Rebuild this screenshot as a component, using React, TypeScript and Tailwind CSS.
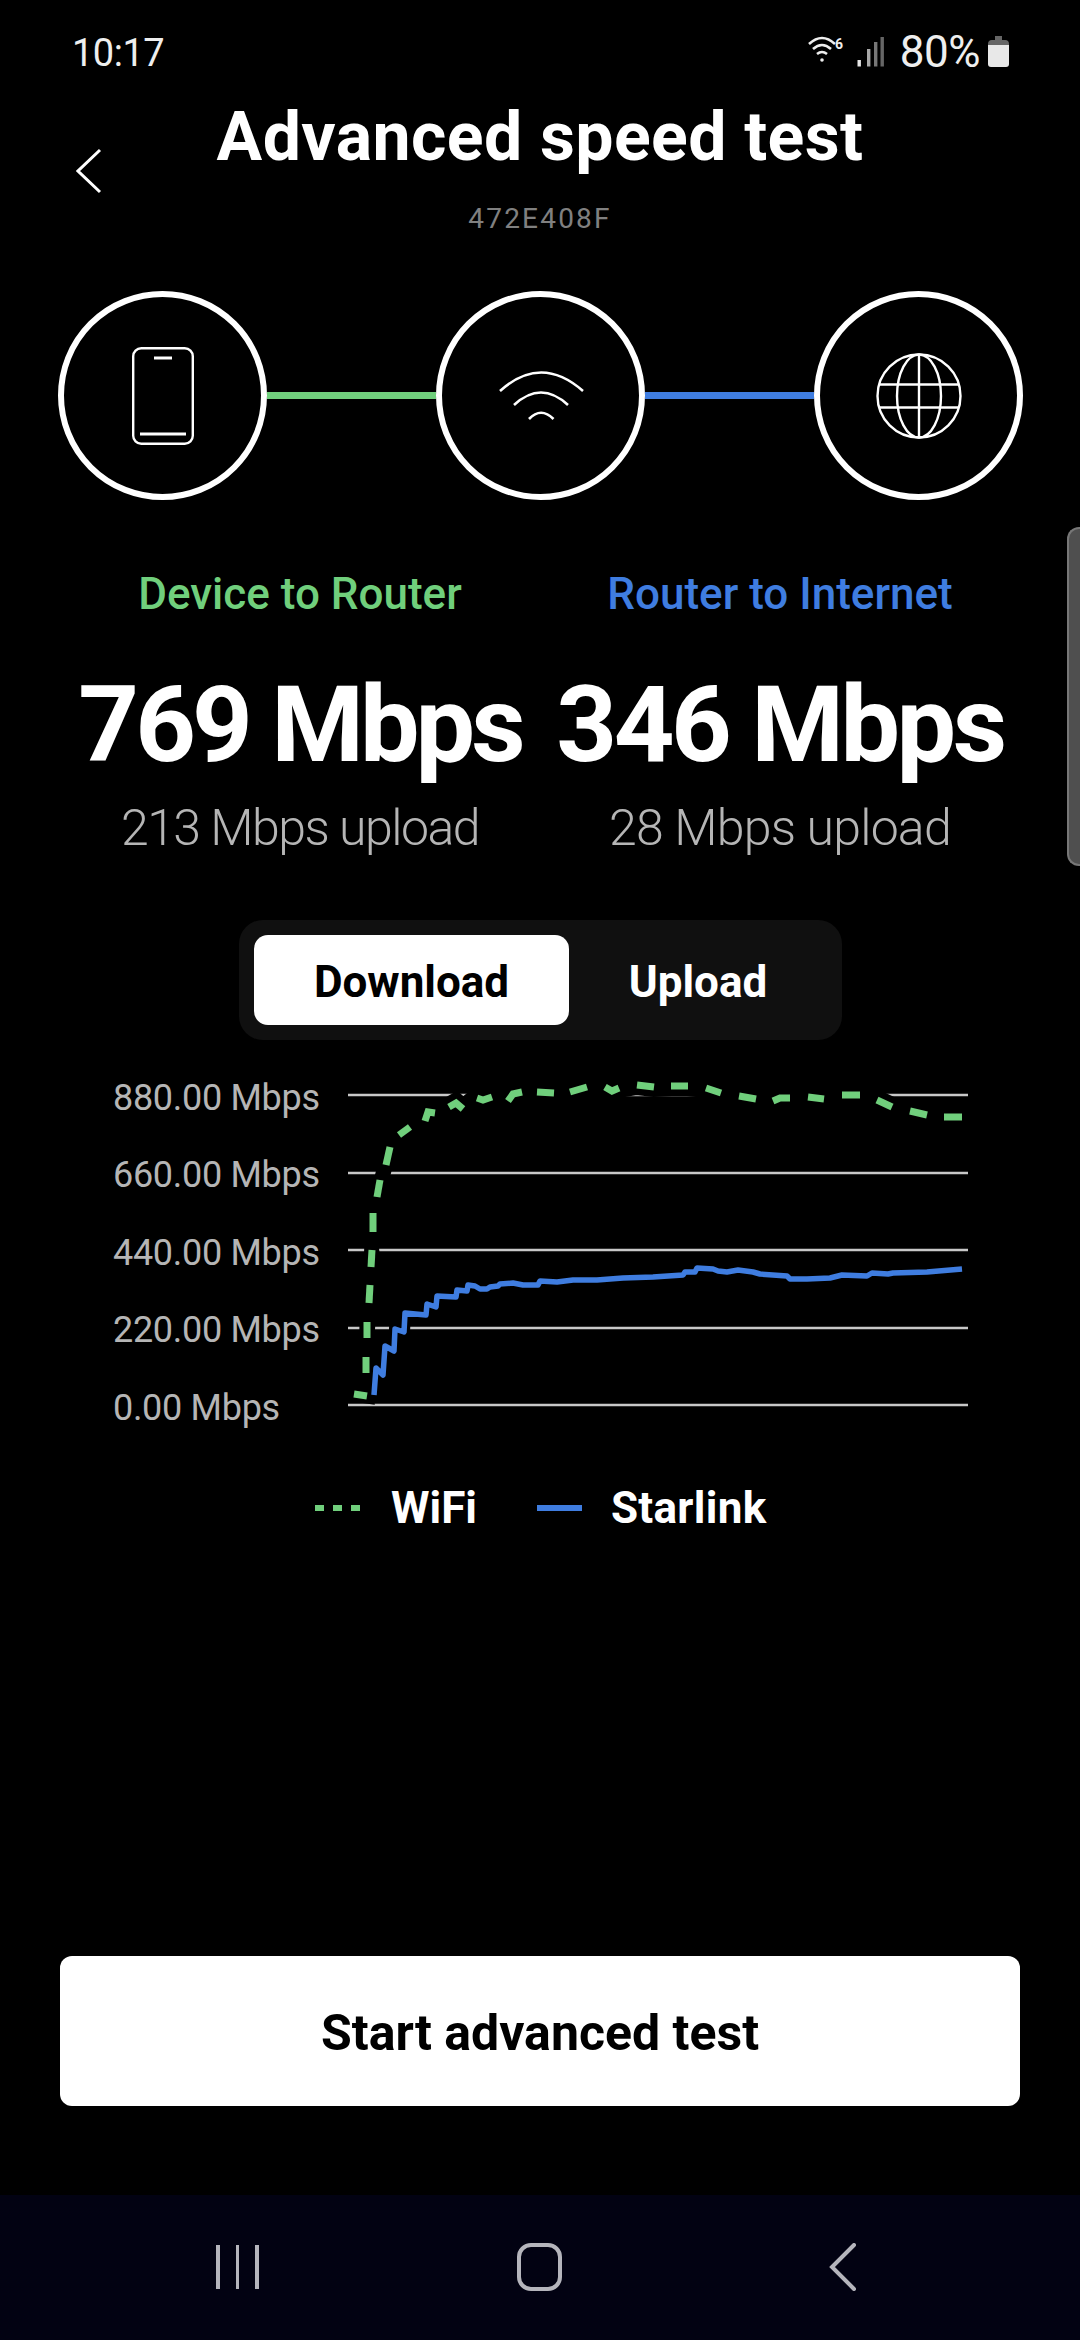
import React from "react";

const gridY = [1095, 1173, 1250, 1328, 1405];
const axisLabels = ["880.00 Mbps", "660.00 Mbps", "440.00 Mbps", "220.00 Mbps", "0.00 Mbps"];

// each entry is one dash of the wifi series
const wifiDashes = [
  "354,1394 367,1396",
  "366,1357 366,1373",
  "367,1322 367,1338",
  "370,1285 369,1303",
  "372,1250 371,1267",
  "373,1213 373,1232",
  "380,1180 377,1197",
  "390,1147 386,1165",
  "410,1127 399,1135",
  "425,1121 428,1112 435,1113",
  "449,1107 456,1103 463,1109",
  "477,1098 483,1100 492,1097",
  "508,1101 513,1094 522,1092",
  "537,1092 554,1093",
  "570,1092 587,1087",
  "605,1087 612,1091 619,1088",
  "637,1085 654,1087",
  "671,1086 688,1086",
  "706,1088 721,1093",
  "739,1096 756,1099",
  "773,1101 780,1098 790,1098",
  "808,1097 824,1099",
  "842,1095 860,1095",
  "877,1100 892,1107",
  "910,1111 927,1115",
  "944,1117 962,1117",
];

const starlinkLine =
  "374,1395 376,1368 383,1375 385,1346 394,1351 395,1329 404,1332 405,1313 426,1315 427,1304 436,1307 437,1296 456,1297 457,1290 467,1291 468,1285 475,1286 480,1289 487,1289 490,1287 498,1286 500,1284 513,1283 523,1285 538,1285 540,1281 557,1282 573,1280 597,1280 623,1278 653,1277 683,1275 685,1272 695,1272 697,1268 713,1269 718,1271 727,1272 738,1270 753,1272 760,1274 787,1276 790,1279 807,1279 830,1278 842,1275 867,1276 872,1273 888,1274 893,1273 927,1272 962,1269";

const StatusIcons = () => (
  <svg width="76" height="32" viewBox="806 37 76 32" fill="none">
    <path d="M807 45 Q820 33 833 45" stroke="#eee" strokeWidth="2.6" />
    <path d="M811 50 Q820 42 829 50" stroke="#eee" strokeWidth="2.6" />
    <path d="M815 55 Q820 51 825 55" stroke="#eee" strokeWidth="2.6" />
    <circle cx="820" cy="61" r="1.8" fill="#eee" />
    <text x="833" y="50" fontSize="14" fontWeight="700" fill="#eee" fontFamily="Roboto, sans-serif">
      6
    </text>
    <rect x="855.5" y="61" width="3.4" height="6.5" fill="#e6e6e6" />
    <rect x="865" y="50" width="3.4" height="17.5" fill="#a8a8a8" />
    <rect x="872" y="43" width="3.4" height="24.5" fill="#777" />
    <rect x="878.5" y="38" width="3.4" height="29.5" fill="#666" />
  </svg>
);

const Battery = () => (
  <svg width="21" height="32" viewBox="0 0 21 32">
    <path d="M7 0h7v4h3a4 4 0 0 1 4 4v1H0V8a4 4 0 0 1 4-4h3z" fill="#666" />
    <path d="M0 9h21v19a3 3 0 0 1-3 3H3a3 3 0 0 1-3-3z" fill="#e8e8e8" />
  </svg>
);

const PhoneIcon = () => (
  <svg width="62" height="98" viewBox="0 0 62 98" fill="none" stroke="#fff">
    <rect x="1.2" y="1.2" width="59.6" height="95.6" rx="8" strokeWidth="2.4" />
    <path d="M22 11h18" strokeWidth="3" />
    <path d="M8 87h46" strokeWidth="3" />
  </svg>
);

const WifiIcon = () => (
  <svg width="86" height="50" viewBox="497 371 86 50" fill="none" stroke="#fff" strokeWidth="2.6">
    <path d="M499 391 Q540 354 582 391" />
    <path d="M513 405 Q540 380 567 405" />
    <path d="M528 419 Q540 406.5 552.5 419" />
  </svg>
);

const GlobeIcon = () => (
  <svg width="86" height="86" viewBox="0 0 86 86" fill="none" stroke="#fff" strokeWidth="2.4">
    <circle cx="43" cy="43" r="41.5" />
    <ellipse cx="43" cy="43" rx="22" ry="41.5" />
    <path d="M43 1.5v83" />
    <path d="M3 31.5h80" />
    <path d="M3 54.5h80" />
  </svg>
);

const Node = ({ children }: { children: React.ReactNode }) => (
  <div className="w-[209px] h-[209px] shrink-0 rounded-full border-[6px] border-white flex items-center justify-center">
    {children}
  </div>
);

const Chart = () => (
  <div className="flex mt-[16px] pl-[113px]">
    <div className="w-[227px] pt-[3px] flex flex-col text-[36px] text-[#b5b5b5] tracking-[-0.3px]">
      {axisLabels.map((label) => (
        <div key={label} className="h-[77.5px] flex items-center">
          {label}
        </div>
      ))}
    </div>
    <svg className="self-start" width="640" height="388" viewBox="340 1056 640 388" fill="none">
      {gridY.map((y) => (
        <line key={y} x1="348" x2="968" y1={y} y2={y} stroke="#c8c8c8" strokeWidth="2.6" />
      ))}
      <polyline points={wifiDashes.slice(0, 10).join(" ")} stroke="#000" strokeWidth="15" />
      <polyline points={wifiDashes.slice(9).join(" ")} stroke="#000" strokeWidth="20" />
      <polyline points={starlinkLine} stroke="#000" strokeWidth="12" />
      {wifiDashes.map((points) => (
        <polyline key={points} points={points} stroke="#70cf7c" strokeWidth="7" />
      ))}
      <polyline points={starlinkLine} stroke="#3f7de0" strokeWidth="5.5" strokeLinejoin="round" />
    </svg>
  </div>
);

export default function App() {
  return (
    <div className="relative w-[1080px] h-[2340px] overflow-hidden bg-black text-white flex flex-col font-['Roboto',sans-serif]">
      {/* status bar */}
      <div className="h-[104px] shrink-0 flex items-center justify-between pl-[72px] pr-[71px]">
        <span className="text-[38px] text-[#eee] tracking-[-0.5px] pt-[2px]">10:17</span>
        <div className="flex items-center">
          <StatusIcons />
          <span className="ml-[16px] mr-[8px] text-[44px] text-[#eee] tracking-[-0.5px]">80%</span>
          <Battery />
        </div>
      </div>

      {/* header */}
      <div className="h-[134px] shrink-0 grid grid-cols-[1fr_auto_1fr]">
        <div className="pl-[76px] self-center">
          <svg width="26" height="46" viewBox="0 0 26 46" fill="none" stroke="#fff" strokeWidth="3">
            <path d="M24 2 L2 23 L24 44" />
          </svg>
        </div>
        <div className="flex flex-col items-center pt-[2px]">
          <h1 className="text-[68px] leading-[62px] font-bold tracking-[0.4px]">Advanced speed test</h1>
          <div className="mt-[36px] text-[28px] leading-[30px] text-[#808080] tracking-[2.2px]">472E408F</div>
        </div>
        <div />
      </div>

      {/* device to router to internet */}
      <div className="mt-[53px] flex items-center pl-[58px]">
        <Node>
          <PhoneIcon />
        </Node>
        <div className="w-[169px] h-[7px] bg-[#70cf7c]" />
        <Node>
          <WifiIcon />
        </Node>
        <div className="w-[169px] h-[7px] bg-[#3f7de0]" />
        <Node>
          <GlobeIcon />
        </Node>
      </div>

      {/* results */}
      <div className="grid grid-cols-2 px-[60px] text-center">
        <div className="mt-[72px] text-[44px] leading-[44px] font-medium text-[#70cf7c]">Device to Router</div>
        <div className="mt-[72px] text-[44px] leading-[44px] font-medium text-[#3f7de0]">Router to Internet</div>
        <div className="mt-[54px] text-[106px] leading-[110px] font-bold tracking-[-4px] whitespace-nowrap">769 Mbps</div>
        <div className="mt-[54px] text-[106px] leading-[110px] font-bold tracking-[-3.5px] whitespace-nowrap">346 Mbps</div>
        <div className="mt-[20px] text-[50px] leading-[56px] font-light text-[#b5b5b5] tracking-[-1.5px]">213 Mbps upload</div>
        <div className="mt-[20px] text-[50px] leading-[56px] font-light text-[#b5b5b5] tracking-[-0.8px]">28 Mbps upload</div>
      </div>

      {/* download / upload toggle */}
      <div className="mt-[64px] ml-[239px] w-[603px] h-[120px] p-[15px] rounded-[24px] bg-[#101010] flex text-[44px] font-bold">
        <div className="w-[315px] pt-[4px] rounded-[14px] bg-white text-black flex items-center justify-center">Download</div>
        <div className="flex-1 pt-[4px] flex items-center justify-center">Upload</div>
      </div>

      <Chart />

      {/* legend */}
      <div className="mt-[36px] h-[50px] flex items-center pl-[315px] text-[44px] font-bold">
        <div className="flex gap-[9px]">
          <div className="w-[9px] h-[6px] bg-[#70cf7c]" />
          <div className="w-[9px] h-[6px] bg-[#70cf7c]" />
          <div className="w-[9px] h-[6px] bg-[#70cf7c]" />
        </div>
        <span className="ml-[31px]">WiFi</span>
        <div className="ml-[60px] w-[45px] h-[6px] bg-[#3f7de0]" />
        <span className="ml-[29px] tracking-[0.3px]">Starlink</span>
      </div>

      {/* start button */}
      <div className="mt-auto mx-[60px] h-[150px] pt-[4px] mb-[89px] rounded-[12px] bg-white text-black flex items-center justify-center text-[50px] font-bold">
        Start advanced test
      </div>

      {/* android nav bar */}
      <div className="h-[145px] shrink-0 bg-[#020212] flex items-start pt-[50px] pl-[216px]">
        <div className="flex gap-[16px]">
          <div className="w-[3.5px] h-[44px] bg-[#b5b5bc]" />
          <div className="w-[3.5px] h-[44px] bg-[#b5b5bc]" />
          <div className="w-[3.5px] h-[44px] bg-[#b5b5bc]" />
        </div>
        <div className="ml-[258px] -mt-[2px] w-[45px] h-[48px] rounded-[14px] border-[4px] border-[#b5b5bc]" />
        <svg className="ml-[267px] -mt-[2px]" width="28" height="48" viewBox="0 0 28 48" fill="none" stroke="#b5b5bc" strokeWidth="4" strokeLinecap="round">
          <path d="M25 2 L3 24 L25 46" />
        </svg>
      </div>

      {/* scroll thumb */}
      <div className="absolute right-0 top-[527px] w-[13px] h-[339px] rounded-l-[12px] bg-[#4f4f4f] border-l-2 border-y-2 border-[#777]" />
    </div>
  );
}
